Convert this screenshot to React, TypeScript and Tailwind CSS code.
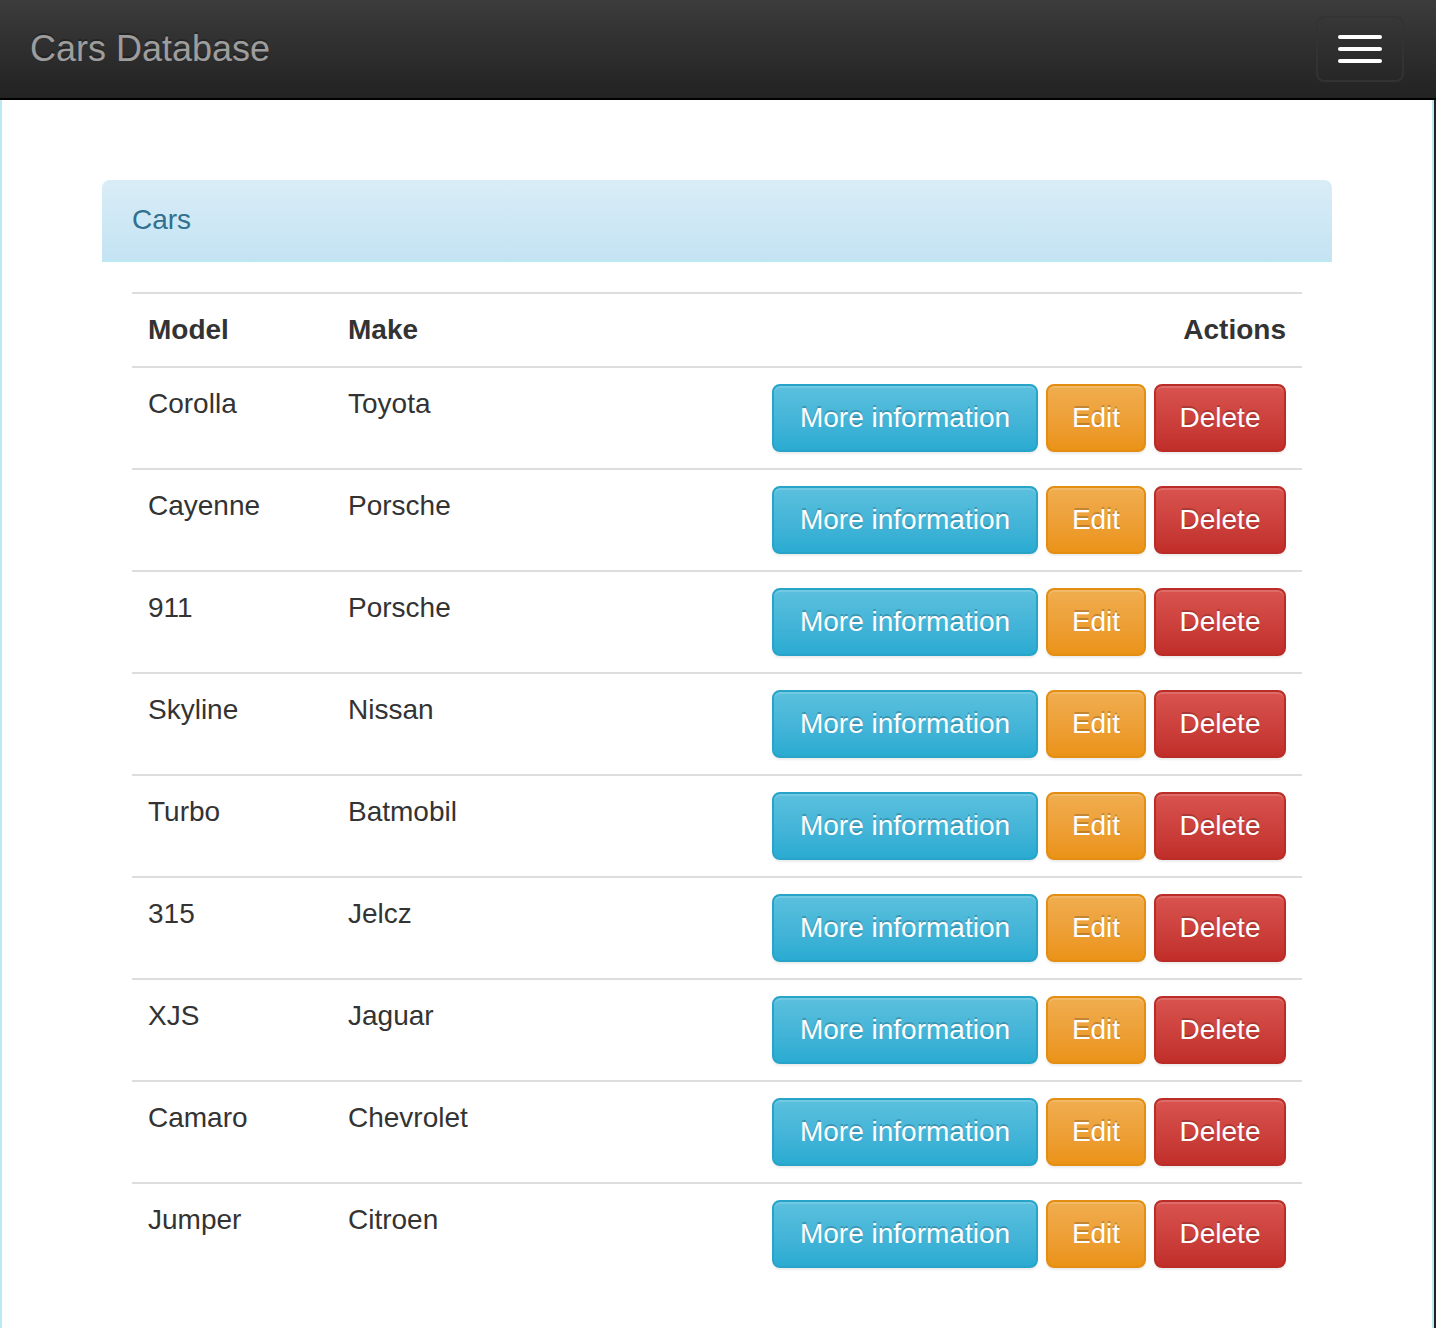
import React from 'react';

const CARS = [
  { model: 'Corolla', make: 'Toyota' },
  { model: 'Cayenne', make: 'Porsche' },
  { model: '911', make: 'Porsche' },
  { model: 'Skyline', make: 'Nissan' },
  { model: 'Turbo', make: 'Batmobil' },
  { model: '315', make: 'Jelcz' },
  { model: 'XJS', make: 'Jaguar' },
  { model: 'Camaro', make: 'Chevrolet' },
  { model: 'Jumper', make: 'Citroen' },
];

const btnBase =
  'h-[68px] rounded-[8px] border-2 text-white text-[28px] leading-[40px] text-center [text-shadow:0_-2px_0_rgba(0,0,0,0.2)] shadow-[inset_0_2px_0_rgba(255,255,255,0.15),0_2px_2px_rgba(0,0,0,0.075)]';

const App: React.FC = () => {
  return (
    <div className="min-h-[1328px] bg-[#222] font-['Liberation_Sans',Arial,sans-serif] text-[#333]">
      {/* navbar */}
      <nav className="h-[100px] flex items-center justify-between pl-[30px] pr-[32px] bg-gradient-to-b from-[#3c3c3c] to-[#222] border-b-2 border-black">
        <span className="text-[36px] leading-[40px] text-[#9d9d9d] [text-shadow:0_-2px_0_rgba(0,0,0,0.25)]">Cars Database</span>
        <button className="w-[88px] h-[66px] rounded-[8px] border-2 border-[#333] flex flex-col items-center justify-center gap-[8px]">
          <span className="block w-[44px] h-[4px] rounded-[2px] bg-white" />
          <span className="block w-[44px] h-[4px] rounded-[2px] bg-white" />
          <span className="block w-[44px] h-[4px] rounded-[2px] bg-white" />
        </button>
      </nav>

      {/* page body */}
      <div className="mr-[2px] bg-white border-x-2 border-[#bce8f1] min-h-[1228px] pt-[80px] pl-[100px] pr-[100px]">
        <div className="rounded-t-[8px] bg-gradient-to-b from-[#d9edf7] to-[#c4e3f3] border-b-2 border-[#bce8f1] px-[30px] py-[20px] text-[28px] leading-[40px] text-[#31708f]">
          Cars
        </div>
        <div className="p-[30px]">
          <table className="w-full border-collapse text-[28px] leading-[40px]">
            <thead>
              <tr className="border-t-2 border-[#ddd]">
                <th className="text-left font-bold p-[16px] w-[200px]">Model</th>
                <th className="text-left font-bold p-[16px]">Make</th>
                <th className="text-right font-bold p-[16px]">Actions</th>
              </tr>
            </thead>
            <tbody>
              {CARS.map((car) => (
                <tr key={car.model} className="border-t-2 border-[#ddd]">
                  <td className="p-[16px] align-top">{car.model}</td>
                  <td className="p-[16px] align-top">{car.make}</td>
                  <td className="p-[16px] align-top">
                    <div className="flex justify-end gap-[8px]">
                      <button className={`${btnBase} w-[266px] bg-gradient-to-b from-[#5bc0de] to-[#2aabd2] border-[#28a4c9]`}>
                        More information
                      </button>
                      <button className={`${btnBase} w-[100px] bg-gradient-to-b from-[#f0ad4e] to-[#eb9316] border-[#e38d13]`}>
                        Edit
                      </button>
                      <button className={`${btnBase} w-[132px] bg-gradient-to-b from-[#d9534f] to-[#c12e2a] border-[#b92c28]`}>
                        Delete
                      </button>
                    </div>
                  </td>
                </tr>
              ))}
            </tbody>
          </table>
        </div>
      </div>
    </div>
  );
};

export default App;
